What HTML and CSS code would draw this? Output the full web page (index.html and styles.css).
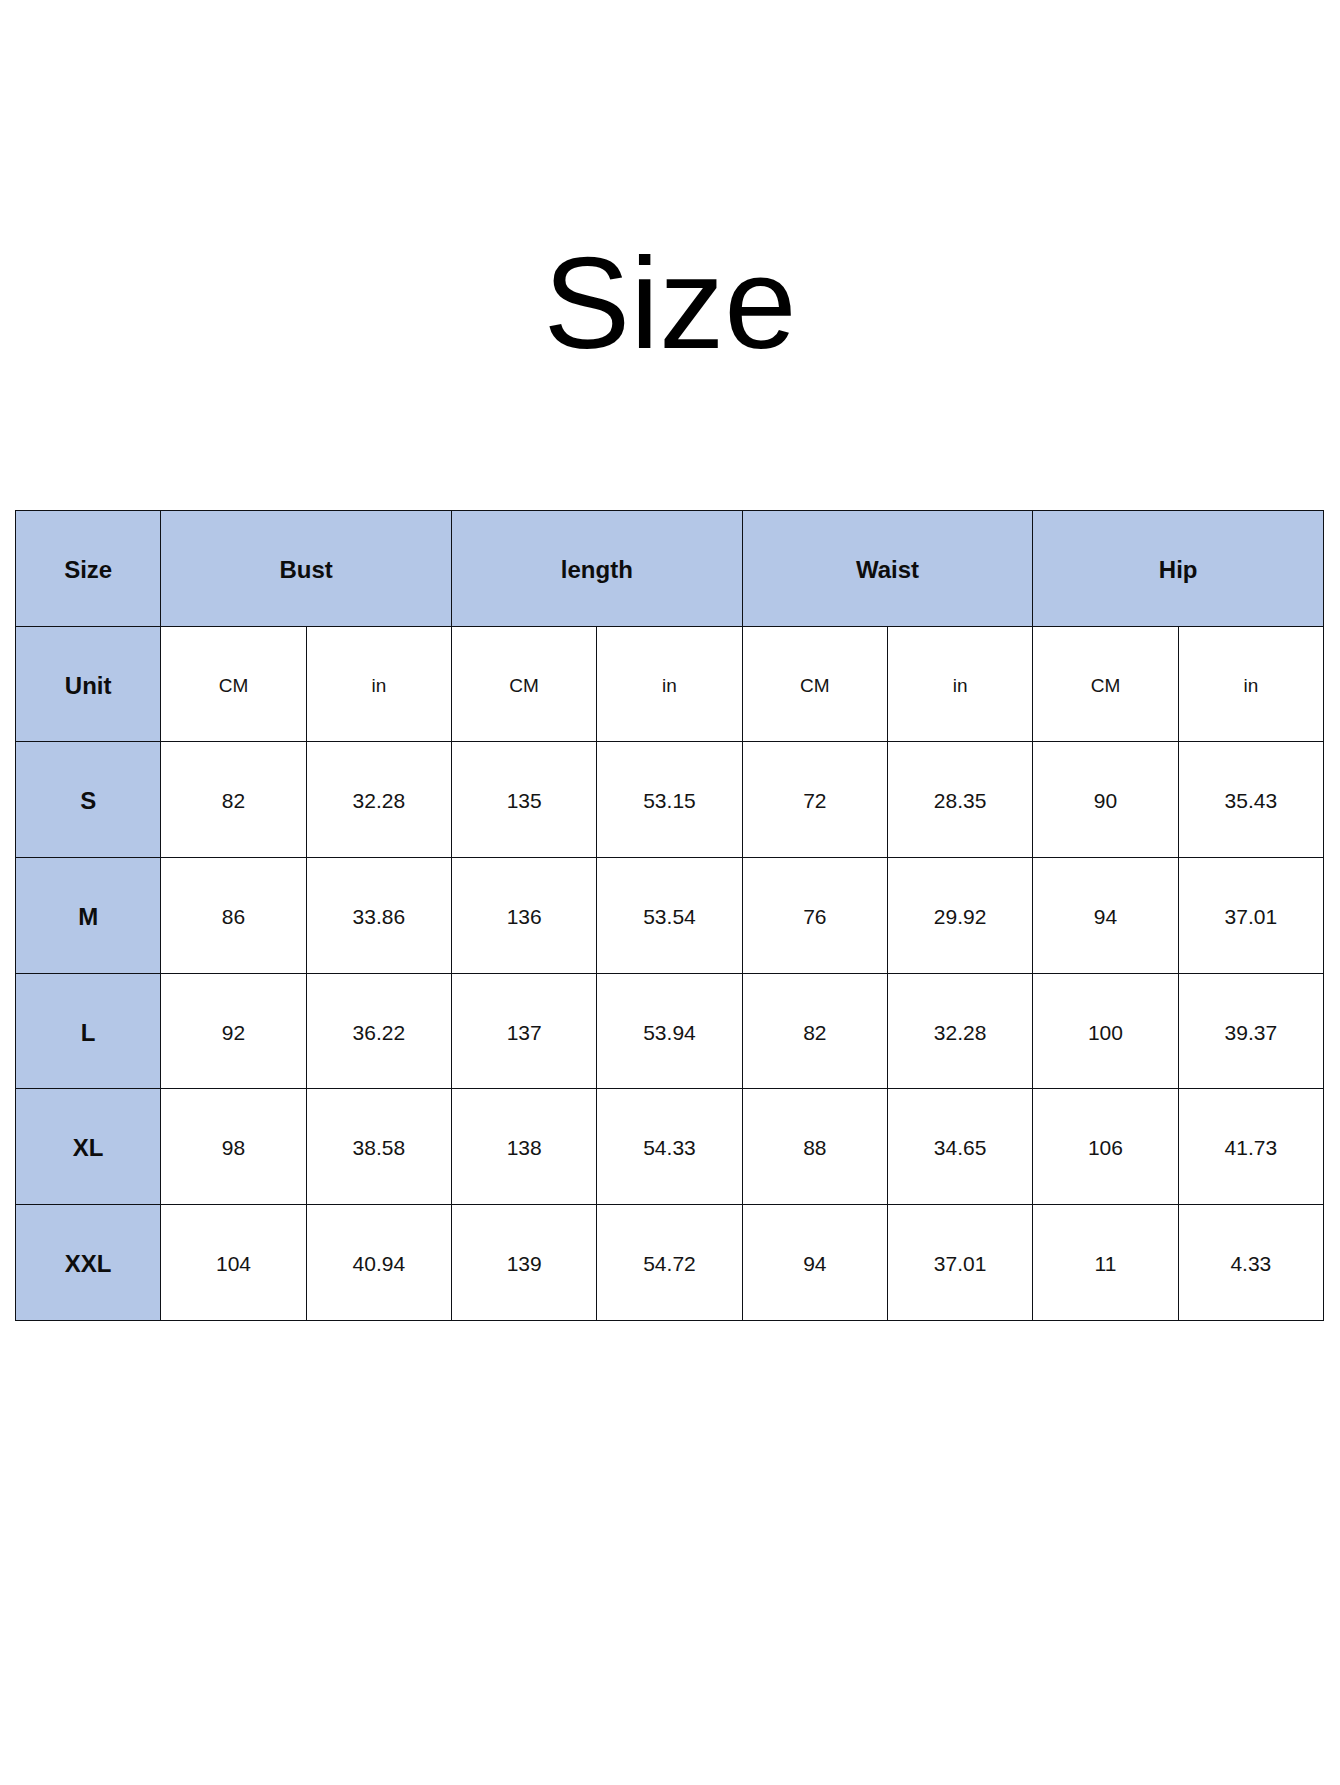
FILE: index.html
```html
<!DOCTYPE html>
<html>
<head>
<meta charset="utf-8">
<link rel="stylesheet" href="styles.css">
</head>
<body>
<div class="page">
  <h1 class="title">Size</h1>
  <table class="chart">
    <colgroup>
      <col><col><col><col><col><col><col><col><col>
    </colgroup>
    <tr class="head">
      <th class="key">Size</th>
      <th colspan="2">Bust</th>
      <th colspan="2">length</th>
      <th colspan="2">Waist</th>
      <th colspan="2">Hip</th>
    </tr>
    <tr class="units">
      <th class="key">Unit</th>
      <td>CM</td><td>in</td><td>CM</td><td>in</td><td>CM</td><td>in</td><td>CM</td><td>in</td>
    </tr>
    <tr>
      <th class="key">S</th>
      <td>82</td><td>32.28</td><td>135</td><td>53.15</td><td>72</td><td>28.35</td><td>90</td><td>35.43</td>
    </tr>
    <tr>
      <th class="key">M</th>
      <td>86</td><td>33.86</td><td>136</td><td>53.54</td><td>76</td><td>29.92</td><td>94</td><td>37.01</td>
    </tr>
    <tr>
      <th class="key">L</th>
      <td>92</td><td>36.22</td><td>137</td><td>53.94</td><td>82</td><td>32.28</td><td>100</td><td>39.37</td>
    </tr>
    <tr>
      <th class="key">XL</th>
      <td>98</td><td>38.58</td><td>138</td><td>54.33</td><td>88</td><td>34.65</td><td>106</td><td>41.73</td>
    </tr>
    <tr>
      <th class="key">XXL</th>
      <td>104</td><td>40.94</td><td>139</td><td>54.72</td><td>94</td><td>37.01</td><td>11</td><td>4.33</td>
    </tr>
  </table>
</div>
</body>
</html>
```

FILE: styles.css
```css
html, body {
  margin: 0;
  padding: 0;
  background: #ffffff;
}

body {
  font-family: "Liberation Sans", Arial, sans-serif;
  color: #111111;
}

.page {
  width: 1340px;
  height: 1785px;
  padding-top: 238px;
  box-sizing: border-box;
}

.title {
  margin: 0;
  font-size: 130px;
  line-height: 130px;
  font-weight: normal;
  text-align: center;
  color: #000000;
}

.chart {
  margin: 142px 0 0 15px;
  width: 1309px;
  table-layout: fixed;
  border-collapse: collapse;
}

.chart tr {
  height: 115.7px;
}

.chart th,
.chart td {
  border: 1px solid #0e1116;
  text-align: center;
  vertical-align: middle;
  padding: 3px 0 0 0;
}

.chart th {
  font-size: 24px;
  font-weight: bold;
  background: #b4c7e7;
  color: #0d0d0d;
}

.chart td {
  font-size: 21px;
  color: #141414;
}

.chart .units td {
  font-size: 19px;
}
```
